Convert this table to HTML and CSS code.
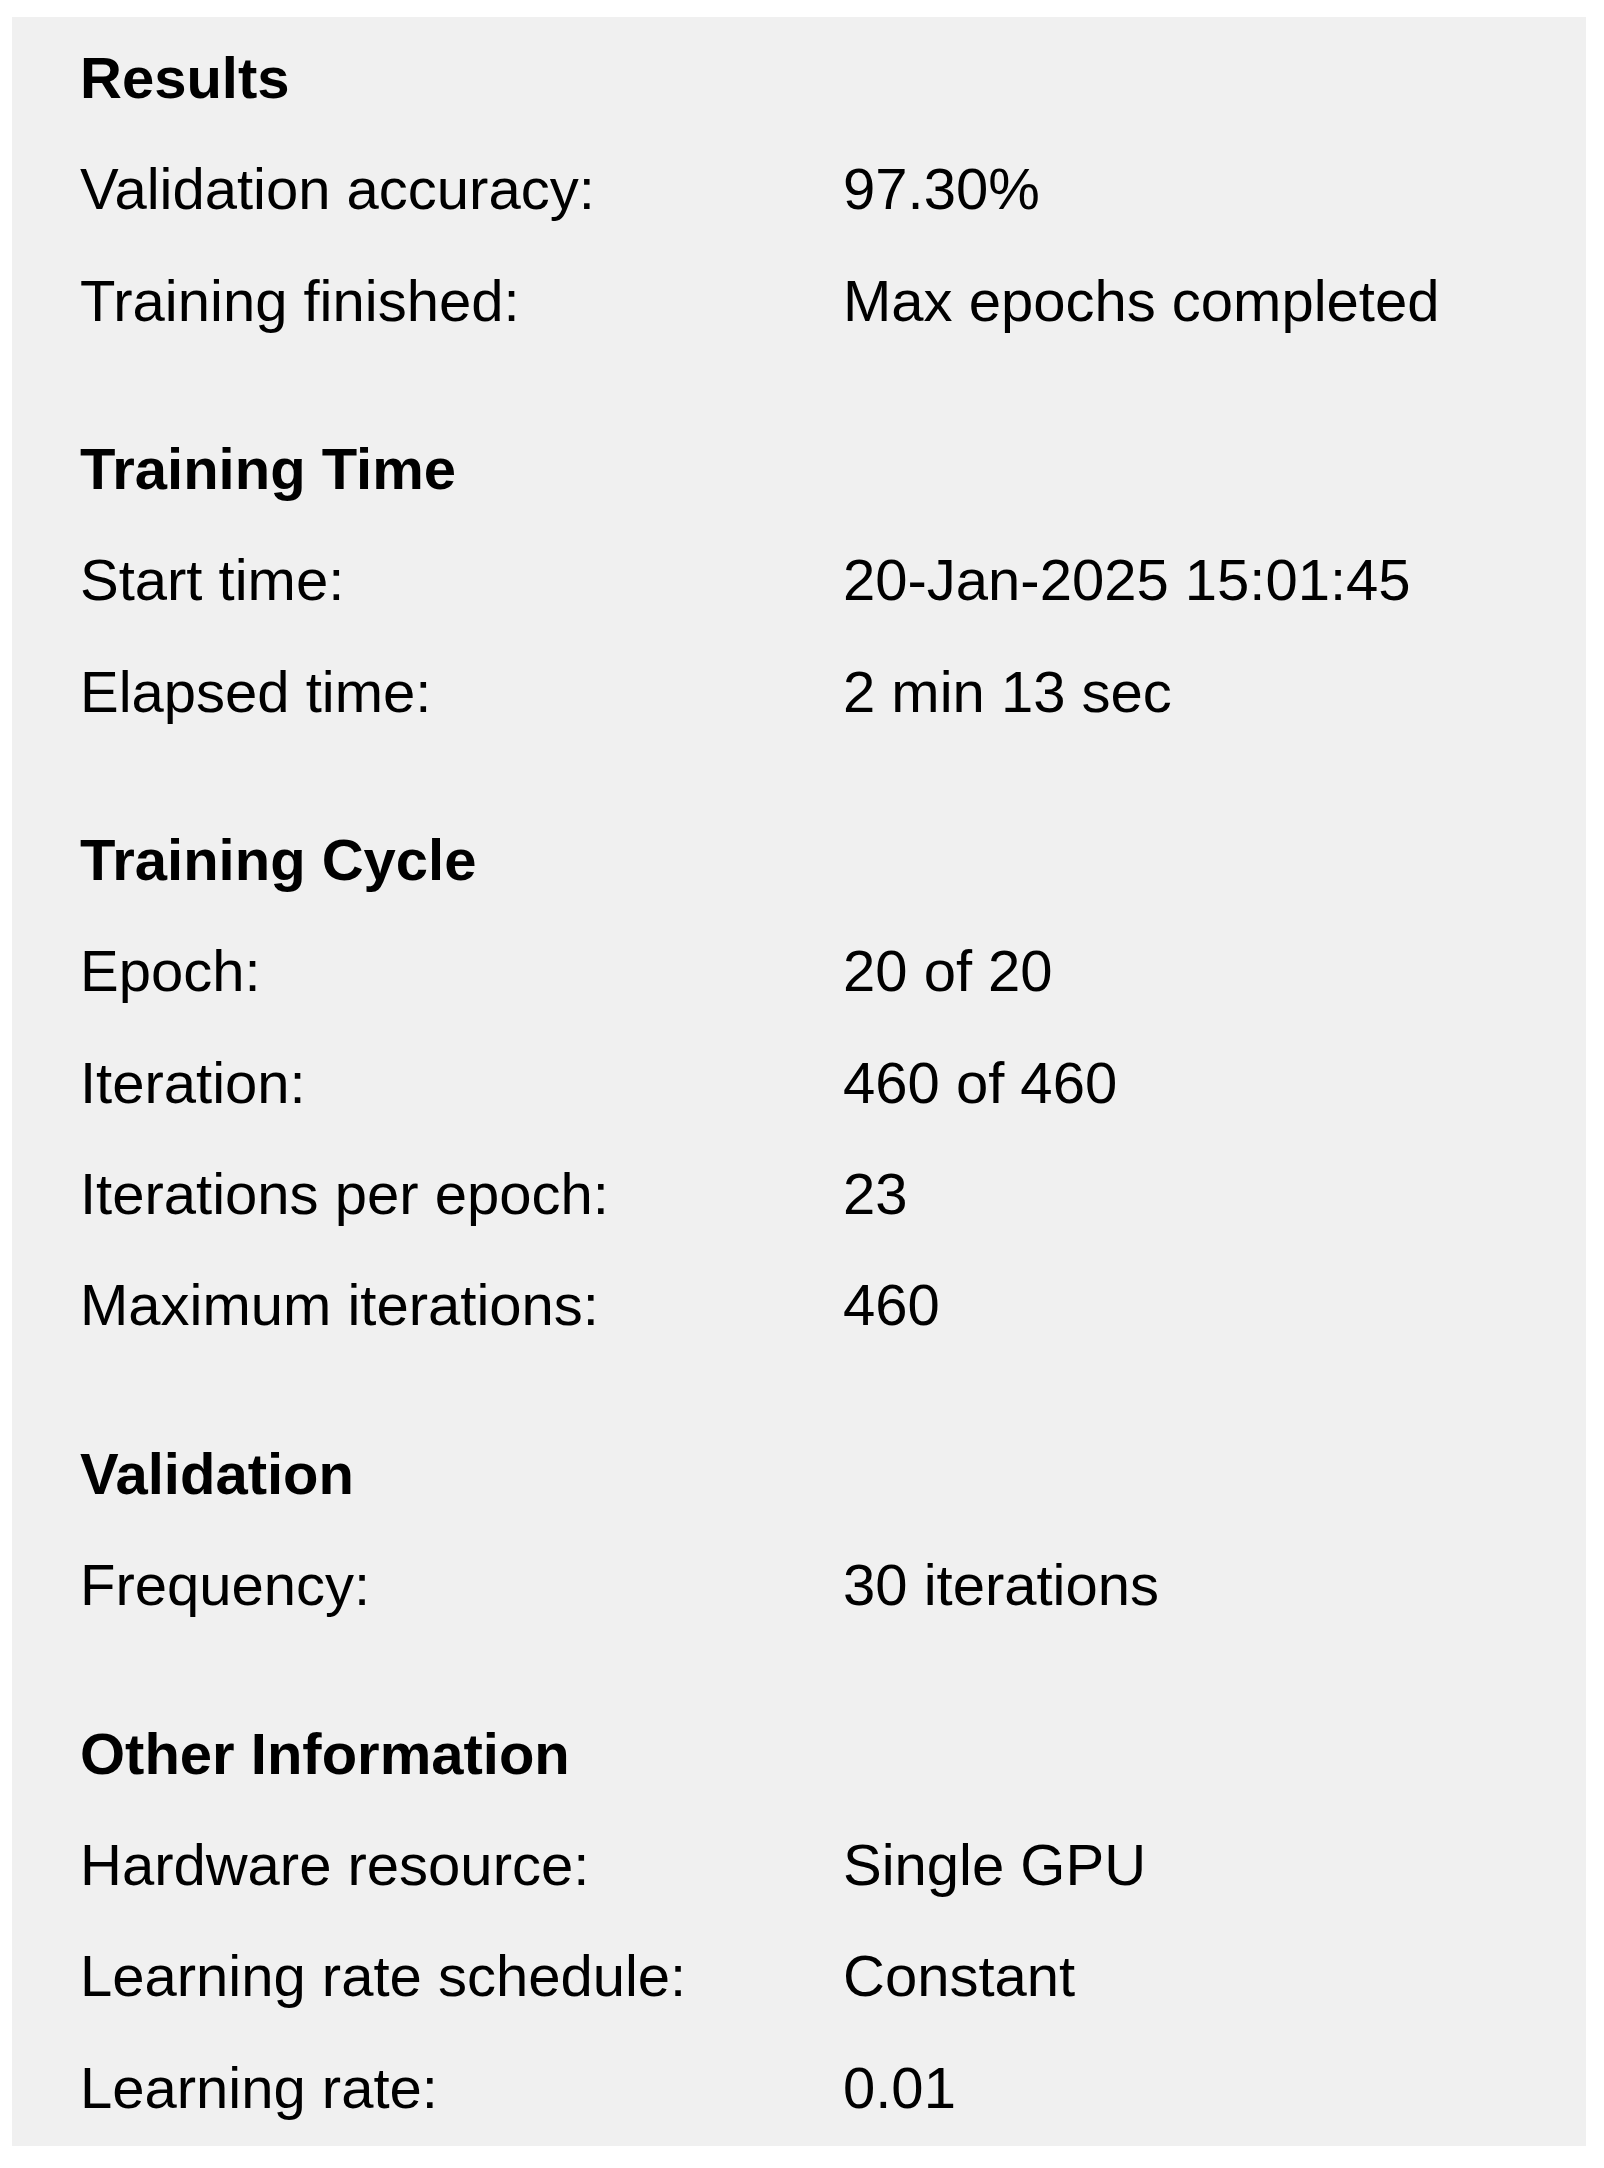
FILE: index.html
```html
<!DOCTYPE html>
<html lang="en">
<head>
<meta charset="utf-8">
<title>Training Results</title>
<link rel="stylesheet" href="styles.css">
</head>
<body>
<div class="panel">
  <section class="section">
    <h2 class="heading">Results</h2>
    <div class="row"><span class="label">Validation accuracy:</span><span class="value">97.30%</span></div>
    <div class="row"><span class="label">Training finished:</span><span class="value">Max epochs completed</span></div>
  </section>
  <section class="section">
    <h2 class="heading">Training Time</h2>
    <div class="row"><span class="label">Start time:</span><span class="value">20-Jan-2025 15:01:45</span></div>
    <div class="row"><span class="label">Elapsed time:</span><span class="value">2 min 13 sec</span></div>
  </section>
  <section class="section">
    <h2 class="heading">Training Cycle</h2>
    <div class="row"><span class="label">Epoch:</span><span class="value">20 of 20</span></div>
    <div class="row"><span class="label">Iteration:</span><span class="value">460 of 460</span></div>
    <div class="row"><span class="label">Iterations per epoch:</span><span class="value">23</span></div>
    <div class="row"><span class="label">Maximum iterations:</span><span class="value">460</span></div>
  </section>
  <section class="section">
    <h2 class="heading">Validation</h2>
    <div class="row"><span class="label">Frequency:</span><span class="value">30 iterations</span></div>
  </section>
  <section class="section">
    <h2 class="heading">Other Information</h2>
    <div class="row"><span class="label">Hardware resource:</span><span class="value">Single GPU</span></div>
    <div class="row"><span class="label">Learning rate schedule:</span><span class="value">Constant</span></div>
    <div class="row"><span class="label">Learning rate:</span><span class="value">0.01</span></div>
  </section>
</div>
</body>
</html>
```

FILE: styles.css
```css
html, body {
  margin: 0;
  padding: 0;
  background: #ffffff;
}

body {
  font-family: "Liberation Sans", Arial, sans-serif;
  color: #000000;
}

.panel {
  box-sizing: border-box;
  margin: 17px 0 0 12px;
  width: 1574px;
  height: 2129px;
  background: #f0f0f0;
  padding: 5px 0 0 68px;
  display: flex;
  flex-direction: column;
  gap: 57.2px;
}

.section {
  display: flex;
  flex-direction: column;
}

.heading {
  margin: 0;
  font-size: 58px;
  font-weight: bold;
  line-height: 111.3px;
}

.row {
  display: grid;
  grid-template-columns: 763px 1fr;
  font-size: 58px;
  line-height: 111.3px;
  white-space: nowrap;
}
```
